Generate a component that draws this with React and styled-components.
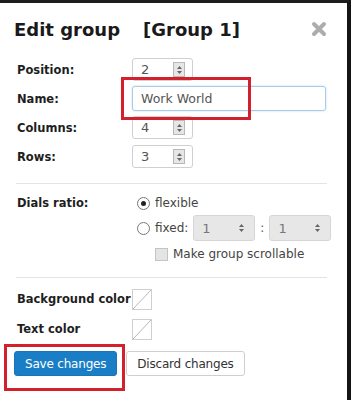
import React from 'react';
import styled, { createGlobalStyle } from 'styled-components';

const GlobalStyle = createGlobalStyle`
  html, body {
    margin: 0;
    padding: 0;
    background: #ffffff;
  }
  body {
    font-family: "DejaVu Sans", Verdana, sans-serif;
    color: #222;
  }
`;

const Frame = styled.div`
  position: relative;
  width: 351px;
  height: 400px;
  box-sizing: border-box;
  border-top: 3px solid #1c1c1c;
  border-right: 4px solid #151515;
  background: #fff;
  overflow: hidden;
`;

const Panel = styled.div`
  display: flex;
  flex-direction: column;
  padding: 0 20px 0 14px;
`;

const Header = styled.div`
  display: flex;
  align-items: center;
  height: 52px;
`;

const Title = styled.h2`
  margin: 0;
  font-size: 18px;
  font-weight: bold;
  color: #1a1a1a;
  width: 129px;
`;

const GroupName = styled.span`
  font-size: 18px;
  font-weight: bold;
  color: #1a1a1a;
  flex: 1;
`;

const Close = styled.div`
  width: 16px;
  height: 16px;
  display: flex;
`;

const Rows = styled.div`
  display: flex;
  flex-direction: column;
  padding-left: 3px;
  margin-top: ${(p) => p.mt || 0}px;
`;

const Row = styled.div`
  display: grid;
  grid-template-columns: 115px 1fr;
  align-items: center;
  height: ${(p) => p.h || 29}px;
`;

const Label = styled.span`
  font-size: 11.5px;
  font-weight: bold;
  color: #1e1e1e;
  white-space: nowrap;
`;

const Spin = styled.div`
  display: flex;
  align-items: center;
  justify-content: space-between;
  box-sizing: border-box;
  width: ${(p) => p.w || 61}px;
  height: ${(p) => p.hh || 23}px;
  border: 1px solid ${(p) => (p.disabled ? '#d6d6d6' : '#d0d0d0')};
  border-radius: 3px;
  background: ${(p) => (p.disabled ? '#e7e7e7' : '#fff')};
  padding: 0 7px 0 8px;
  font-size: 13px;
  color: ${(p) => (p.disabled ? '#777' : '#555')};
`;

const Arrows = styled.div`
  display: flex;
  flex-direction: column;
  align-items: center;
  justify-content: center;
  width: 12px;
  height: 15px;
  box-sizing: border-box;
  border: ${(p) => (p.disabled ? 'none' : '1px solid #b8b8b8')};
  background: ${(p) => (p.disabled ? 'transparent' : '#e6e6e6')};
  gap: 2px;
`;

const NameInput = styled.div`
  display: flex;
  align-items: center;
  box-sizing: border-box;
  width: 194px;
  height: 25px;
  border: 1px solid #a8cbe6;
  border-radius: 3px;
  padding-left: 8px;
  font-size: 12.5px;
  color: #555;
  box-shadow: 0 0 2px rgba(120, 175, 220, 0.5);
`;

const Divider = styled.div`
  height: 1px;
  background: #e4e4e4;
  margin: ${(p) => p.m || '0'};
  margin-left: 2px;
  margin-right: 0;
`;

const Dials = styled.div`
  display: grid;
  grid-template-columns: 120px 1fr;
  padding-left: 3px;
  margin-top: 8px;
`;

const DialLabel = styled(Label)`
  line-height: 22px;
`;

const Options = styled.div`
  display: flex;
  flex-direction: column;
`;

const Option = styled.div`
  display: flex;
  align-items: center;
  height: ${(p) => p.h || 22}px;
  font-size: 12px;
  color: #444;
  gap: ${(p) => p.gap || 5}px;
`;

const Radio = styled.span`
  width: 11px;
  height: 11px;
  border-radius: 50%;
  border: 1px solid #777;
  display: flex;
  align-items: center;
  justify-content: center;
  &::after {
    content: '';
    width: 5px;
    height: 5px;
    border-radius: 50%;
    background: ${(p) => (p.checked ? '#222' : 'transparent')};
  }
`;

const Fixed = styled.span`
  display: flex;
  align-items: center;
`;

const Colon = styled.span`
  margin: 0 5px;
  color: #555;
`;

const Checkbox = styled.span`
  width: 11px;
  height: 11px;
  border: 1px solid #c4c4c4;
  background: #e4e4e4;
  margin-left: 18px;
`;

const Swatch = styled.div`
  width: 20px;
  height: 21px;
  box-sizing: border-box;
  border: 1px solid #cfcfcf;
  background: linear-gradient(
    to bottom right,
    transparent calc(50% - 0.7px),
    #b5b5b5 50%,
    transparent calc(50% + 0.7px)
  );
`;

const Buttons = styled.div`
  display: flex;
  gap: 9px;
  margin-top: 7px;
`;

const Button = styled.button`
  height: 25px;
  padding: 0 10px;
  border-radius: 3px;
  font-family: "DejaVu Sans", Verdana, sans-serif;
  font-size: 12px;
  letter-spacing: -0.2px;
  border: 1px solid ${(p) => (p.primary ? '#1675bb' : '#cfcfcf')};
  background: ${(p) => (p.primary ? '#1a7ec6' : '#fff')};
  color: ${(p) => (p.primary ? '#fff' : '#333')};
`;

const Highlight = styled.div`
  position: absolute;
  box-sizing: border-box;
  border: 3px solid #d3202e;
  left: ${(p) => p.x}px;
  top: ${(p) => p.y}px;
  width: ${(p) => p.w}px;
  height: ${(p) => p.h}px;
`;

function Caret({ up }) {
  return (
    <svg width="5" height="3" viewBox="0 0 5 3">
      <path d={up ? 'M0 3 L2.5 0 L5 3 Z' : 'M0 0 L2.5 3 L5 0 Z'} fill="#666" />
    </svg>
  );
}

function SpinBox({ value, w, hh, disabled }) {
  return (
    <Spin w={w} hh={hh} disabled={disabled}>
      <span>{value}</span>
      <Arrows disabled={disabled}>
        <Caret up />
        <Caret />
      </Arrows>
    </Spin>
  );
}

export default function App() {
  return (
    <>
      <GlobalStyle />
      <Frame>
        <Panel>
          <Header>
            <Title>Edit group</Title>
            <GroupName>[Group 1]</GroupName>
            <Close>
              <svg width="16" height="16" viewBox="0 0 16 16">
                <path d="M3 3 L13 13 M13 3 L3 13" stroke="#adadad" strokeWidth="4" strokeLinecap="round" />
              </svg>
            </Close>
          </Header>
          <Rows>
            <Row>
              <Label>Position:</Label>
              <SpinBox value="2" />
            </Row>
            <Row>
              <Label>Name:</Label>
              <NameInput>Work World</NameInput>
            </Row>
            <Row>
              <Label>Columns:</Label>
              <SpinBox value="4" />
            </Row>
            <Row>
              <Label>Rows:</Label>
              <SpinBox value="3" />
            </Row>
          </Rows>
          <Divider m="12px 0 0" />
          <Dials>
            <DialLabel>Dials ratio:</DialLabel>
            <Options>
              <Option>
                <Radio checked />
                flexible
              </Option>
              <Option h={28}>
                <Radio />
                fixed:
                <Fixed>
                  <SpinBox value="1" w={62} hh={26} disabled />
                  <Colon>:</Colon>
                  <SpinBox value="1" w={62} hh={26} disabled />
                </Fixed>
              </Option>
              <Option h={24}>
                <Checkbox />
                Make group scrollable
              </Option>
            </Options>
          </Dials>
          <Divider m="11px 0 0" />
          <Rows mt={6}>
            <Row h={30}>
              <Label>Background color</Label>
              <Swatch />
            </Row>
            <Row h={30}>
              <Label>Text color</Label>
              <Swatch />
            </Row>
          </Rows>
          <Buttons>
            <Button primary>Save changes</Button>
            <Button>Discard changes</Button>
          </Buttons>
        </Panel>
        <Highlight x={121} y={74} w={130} h={43} />
        <Highlight x={4} y={341} w={121} h={47} />
      </Frame>
    </>
  );
}
